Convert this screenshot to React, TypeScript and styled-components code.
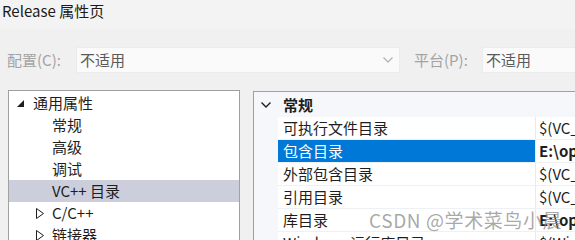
import React, { FC } from "react";
import styled, { createGlobalStyle } from "styled-components";

const GlobalStyle = createGlobalStyle`
  html, body {
    margin: 0;
    padding: 0;
    background: #f0f0f0;
    overflow: hidden;
  }
  body {
    font-family: "Noto Sans CJK SC", "Noto Sans", sans-serif;
    font-size: 15px;
    color: #1e1e1e;
  }
`;

const Page = styled.div`
  width: 575px;
  height: 240px;
  overflow: hidden;
  position: relative;
`;

const TitleBar = styled.div`
  height: 29px;
  background: #f3f3f3;
  padding-left: 2px;
  font-size: 15px;
  line-height: 21px;
  color: #1a1a1a;
`;

const ConfigRow = styled.div`
  display: flex;
  align-items: center;
  margin-top: 18px;
  height: 26px;
`;

const ConfigLabel = styled.div<{ $width: number; $left: number }>`
  width: ${(p) => p.$width}px;
  padding-left: ${(p) => p.$left}px;
  box-sizing: border-box;
  color: #a3a3a3;
  font-size: 15px;
  line-height: 26px;
  flex-shrink: 0;
`;

const Combo = styled.div<{ $width: number }>`
  width: ${(p) => p.$width}px;
  height: 26px;
  box-sizing: border-box;
  background: #fafafa;
  border: 1px solid #ececec;
  display: flex;
  align-items: center;
  justify-content: space-between;
  padding: 0 6px 0 3px;
  flex-shrink: 0;
  color: #5a5a5a;
  line-height: 24px;
`;

const Panels = styled.div`
  display: flex;
  align-items: flex-start;
  margin-top: 17px;
  padding-left: 8px;
  gap: 13px;
`;

const TreePanel = styled.div`
  width: 232px;
  height: 170px;
  box-sizing: border-box;
  background: #ffffff;
  border: 1px solid #a0a0a0;
  padding-top: 1px;
  flex-shrink: 0;
`;

const TreeRow = styled.div<{ $indent: number; $selected?: boolean }>`
  height: 22px;
  display: flex;
  align-items: center;
  padding-left: ${(p) => p.$indent}px;
  background: ${(p) => (p.$selected ? "#cccedb" : "transparent")};
  line-height: 22px;
  color: #1e1e1e;
`;

const Arrow = styled.span`
  width: 16px;
  display: inline-flex;
  align-items: center;
`;

const GridPanel = styled.div`
  flex: 1;
  margin-top: 1px;
  height: 170px;
  background: #f5f7fa;
  border: 1px solid #a0a0a0;
  border-right: none;
  overflow: hidden;
`;

const Category = styled.div`
  height: 25px;
  display: flex;
  align-items: center;
  padding-left: 7px;
  font-weight: bold;
  line-height: 25px;
`;

const ChevronBox = styled.span`
  width: 22px;
  display: inline-flex;
  align-items: center;
`;

const PropRow = styled.div`
  display: flex;
  margin-left: 24px;
  height: 23px;
  background: #ffffff;
  border-bottom: 1px solid #eef0f4;
  box-sizing: border-box;
`;

const NameCell = styled.div<{ $selected?: boolean }>`
  width: 258px;
  flex-shrink: 0;
  padding-left: 5px;
  box-sizing: border-box;
  border-right: 1px solid #e6e9ee;
  background: ${(p) => (p.$selected ? "#0078d7" : "transparent")};
  color: ${(p) => (p.$selected ? "#ffffff" : "#1e1e1e")};
  line-height: 22px;
  white-space: nowrap;
  overflow: hidden;
`;

const ValueCell = styled.div<{ $bold?: boolean }>`
  padding-left: 3px;
  font-weight: ${(p) => (p.$bold ? "bold" : "normal")};
  line-height: 22px;
  white-space: nowrap;
  overflow: hidden;
  color: #1e1e1e;
`;

const Watermark = styled.div`
  position: absolute;
  left: 369px;
  top: 207px;
  font-size: 19px;
  line-height: 26px;
  letter-spacing: 0.6px;
  color: rgba(140, 140, 140, 0.75);
  white-space: nowrap;
  pointer-events: none;
`;

const FilledTriangle = () => (
  <svg width="7" height="7" viewBox="0 0 7 7">
    <polygon points="7,0 7,7 0,7" fill="#1e1e1e" />
  </svg>
);

const OpenTriangle = () => (
  <svg width="8" height="11" viewBox="0 0 8 11">
    <polygon points="0.5,0.5 7.5,5.5 0.5,10.5" fill="none" stroke="#1e1e1e" strokeWidth="1" />
  </svg>
);

const Chevron: FC<{ color?: string }> = ({ color = "#1e1e1e" }) => (
  <svg width="10" height="6" viewBox="0 0 10 6">
    <polyline points="0.5,0.5 5,5 9.5,0.5" fill="none" stroke={color} strokeWidth="1.4" />
  </svg>
);

const treeItems = [
  { label: "通用属性", indent: 8, arrow: "open" },
  { label: "常规", indent: 43 },
  { label: "高级", indent: 43 },
  { label: "调试", indent: 43 },
  { label: "VC++ 目录", indent: 43, selected: true },
  { label: "C/C++", indent: 27, arrow: "closed" },
  { label: "链接器", indent: 27, arrow: "closed" },
];

const props = [
  { name: "可执行文件目录", value: "$(VC_ExecutablePath_x64);$(CommonExecutablePath)" },
  { name: "包含目录", value: "E:\\opencv\\build\\include;$(IncludePath)", bold: true, selected: true },
  { name: "外部包含目录", value: "$(VC_IncludePath);$(WindowsSDK_IncludePath);" },
  { name: "引用目录", value: "$(VC_ReferencesPath_x64);" },
  { name: "库目录", value: "E:\\opencv\\build\\x64\\vc15\\lib;$(LibraryPath)", bold: true },
  { name: "Windows 运行库目录", value: "$(WindowsSDK_MetadataPath);" },
];

const App: FC = () => (
  <>
    <GlobalStyle />
    <Page>
      <TitleBar>Release 属性页</TitleBar>
      <ConfigRow>
        <ConfigLabel $width={76} $left={7}>配置(C):</ConfigLabel>
        <Combo $width={324}>
          <span>不适用</span>
          <Chevron color="#b5b5b5" />
        </Combo>
        <ConfigLabel $width={82} $left={14}>平台(P):</ConfigLabel>
        <Combo $width={120}>
          <span>不适用</span>
        </Combo>
      </ConfigRow>
      <Panels>
        <TreePanel>
          {treeItems.map((item) => (
            <TreeRow key={item.label} $indent={item.indent} $selected={item.selected}>
              {item.arrow && (
                <Arrow>{item.arrow === "open" ? <FilledTriangle /> : <OpenTriangle />}</Arrow>
              )}
              {item.label}
            </TreeRow>
          ))}
        </TreePanel>
        <GridPanel>
          <Category>
            <ChevronBox>
              <Chevron />
            </ChevronBox>
            常规
          </Category>
          {props.map((p) => (
            <PropRow key={p.name}>
              <NameCell $selected={p.selected}>{p.name}</NameCell>
              <ValueCell $bold={p.bold}>{p.value}</ValueCell>
            </PropRow>
          ))}
        </GridPanel>
      </Panels>
      <Watermark>CSDN @学术菜鸟小晨</Watermark>
    </Page>
  </>
);

export default App;
